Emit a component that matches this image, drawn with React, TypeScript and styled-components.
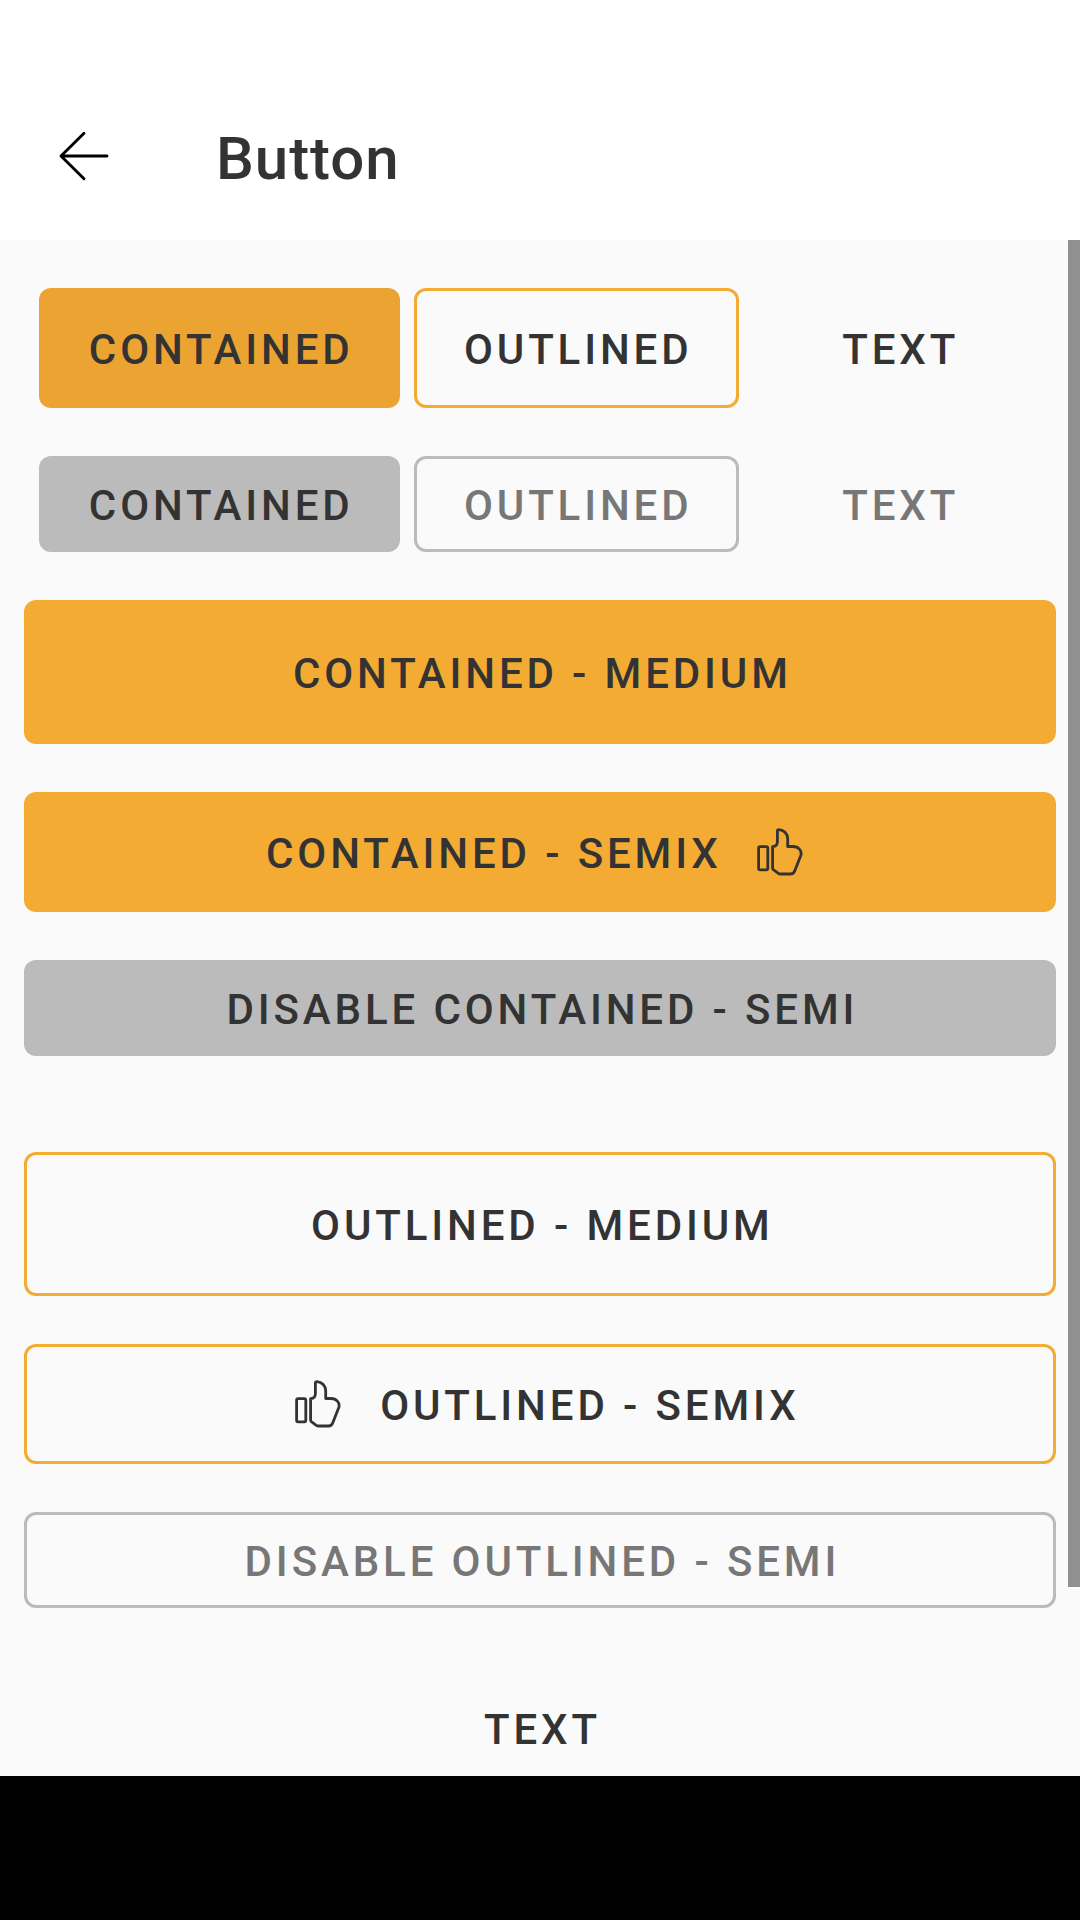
import React from 'react';
import styled, { createGlobalStyle, css } from 'styled-components';

const GlobalStyle = createGlobalStyle`
  *, *::before, *::after { box-sizing: border-box; }
  body { margin: 0; background: #fafafa; }
`;

const Screen = styled.div`
  display: flex;
  flex-direction: column;
  width: 1080px;
  height: 1920px;
  overflow: hidden;
  background: #fafafa;
  font-family: Roboto, 'Noto Sans', sans-serif;
  color: #333333;
`;

const AppBar = styled.header`
  flex: none;
  display: flex;
  align-items: center;
  height: 240px;
  padding: 72px 48px 0 48px;
  background: #ffffff;
`;

const BackButton = styled.button`
  display: flex;
  width: 72px;
  height: 72px;
  padding: 0;
  border: 0;
  background: none;
  color: #000000;
`;

const Title = styled.h1`
  margin: 0 0 0 96px;
  padding-top: 6px;
  font-size: 60px;
  line-height: 72px;
  font-weight: 500;
  letter-spacing: 0.95px;
`;

const ScrollArea = styled.main`
  flex: none;
  display: flex;
  height: 1536px;
  overflow: hidden;
`;

const Content = styled.div`
  flex: 1;
  display: flex;
  flex-direction: column;
  gap: 48px;
  padding: 48px 12px 0 24px;
`;

const ScrollThumb = styled.div`
  width: 12px;
  height: 1347px;
  background: #909090;
`;

const NavigationBar = styled.footer`
  flex: 1;
  background: #000000;
`;

const ButtonRow = styled.div`
  display: flex;
  gap: 14px;
  padding-left: 15px;
`;

const Group = styled.section`
  display: flex;
  flex-direction: column;
  gap: 48px;
  & + & { margin-top: 48px; }
`;

type Variant = 'contained' | 'outlined' | 'text';
type Size = 'medium' | 'semix' | 'semi';

const heights: Record<Size, number> = { medium: 144, semix: 120, semi: 96 };

const variants = {
  contained: css<{ $pressed?: boolean; $off?: boolean }>`
    background: ${p => (p.$off ? '#bbbbbb' : p.$pressed ? '#eba432' : '#f4ab33')};
    color: #333333;
  `,
  outlined: css<{ $off?: boolean }>`
    border: 3px solid ${p => (p.$off ? '#bbbbbb' : '#f4ab33')};
    color: ${p => (p.$off ? '#777777' : '#333333')};
  `,
  text: css<{ $off?: boolean }>`
    color: ${p => (p.$off ? '#777777' : '#333333')};
  `,
};

const Button = styled.button<{
  $variant: Variant;
  $size: Size;
  $width?: number;
  $pressed?: boolean;
  $off?: boolean;
}>`
  flex: none;
  display: flex;
  align-items: center;
  justify-content: center;
  gap: 36px;
  width: ${p => (p.$width ? `${p.$width}px` : '100%')};
  height: ${p => heights[p.$size]}px;
  padding: 4px 0 0 ${p => (p.$width ? 3.5 : 4.8)}px;
  border: 0;
  border-radius: 12px;
  background: none;
  font: 500 42px/48px Roboto, 'Noto Sans', sans-serif;
  letter-spacing: 3.88px;
  white-space: nowrap;
  ${p => variants[p.$variant]}
`;

const Glyph = styled.svg`
  flex: none;
  display: block;
  fill: none;
  stroke: currentColor;
  stroke-linecap: round;
  stroke-linejoin: round;
`;

const IconSlot = styled.span<{ $side: 'start' | 'end' }>`
  flex: none;
  margin: ${p => (p.$side === 'start' ? '0 3.3px 4px 9.6px' : '0 15.8px 4px -0.8px')};
`;

const BackArrow = () => (
  <Glyph width="72" height="72" viewBox="0 0 72 72" strokeWidth="2.9">
    <path d="M59 36H13M36 13.2L13 36L36 58.8" />
  </Glyph>
);

const ThumbUp = ({ side }: { side: 'start' | 'end' }) => (
  <IconSlot $side={side}>
    <Glyph width="46" height="48" viewBox="0 0 46 48" strokeWidth="2.8">
      <rect x="1.6" y="18.6" width="9.2" height="23.2" rx="1.5" />
      <path d="M15.6 18.6C18.7 18.4 20.4 16.6 20.4 13.7V3C20.4 2.1 21 1.7 22 1.7C27 1.9 30.7 6 30.7 10.8V18.5H36C41.4 18.5 45 22.7 43.9 27.2L37.8 42.7C37 45 35.7 46 33.5 46H23.5C22.6 46 22 45.8 21.3 45.3L16.3 41.6C15.8 41.2 15.6 40.9 15.6 40.3Z" />
    </Glyph>
  </IconSlot>
);

export default function App() {
  return (
    <>
      <GlobalStyle />
      <Screen>
        <AppBar>
          <BackButton aria-label="Back"><BackArrow /></BackButton>
          <Title>Button</Title>
        </AppBar>
        <ScrollArea>
          <Content>
            <ButtonRow>
              <Button $variant="contained" $size="semix" $width={361} $pressed>CONTAINED</Button>
              <Button $variant="outlined" $size="semix" $width={325}>OUTLINED</Button>
              <Button $variant="text" $size="semix" $width={292}>TEXT</Button>
            </ButtonRow>
            <ButtonRow>
              <Button $variant="contained" $size="semi" $width={361} $off disabled>CONTAINED</Button>
              <Button $variant="outlined" $size="semi" $width={325} $off disabled>OUTLINED</Button>
              <Button $variant="text" $size="semi" $width={292} $off disabled>TEXT</Button>
            </ButtonRow>
            <Group>
              <Button $variant="contained" $size="medium">CONTAINED - MEDIUM</Button>
              <Button $variant="contained" $size="semix">CONTAINED - SEMIX<ThumbUp side="end" /></Button>
              <Button $variant="contained" $size="semi" $off disabled>DISABLE CONTAINED - SEMI</Button>
            </Group>
            <Group>
              <Button $variant="outlined" $size="medium">OUTLINED - MEDIUM</Button>
              <Button $variant="outlined" $size="semix"><ThumbUp side="start" />OUTLINED - SEMIX</Button>
              <Button $variant="outlined" $size="semi" $off disabled>DISABLE OUTLINED - SEMI</Button>
            </Group>
            <Button $variant="text" $size="medium">TEXT</Button>
          </Content>
          <ScrollThumb />
        </ScrollArea>
        <NavigationBar />
      </Screen>
    </>
  );
}
